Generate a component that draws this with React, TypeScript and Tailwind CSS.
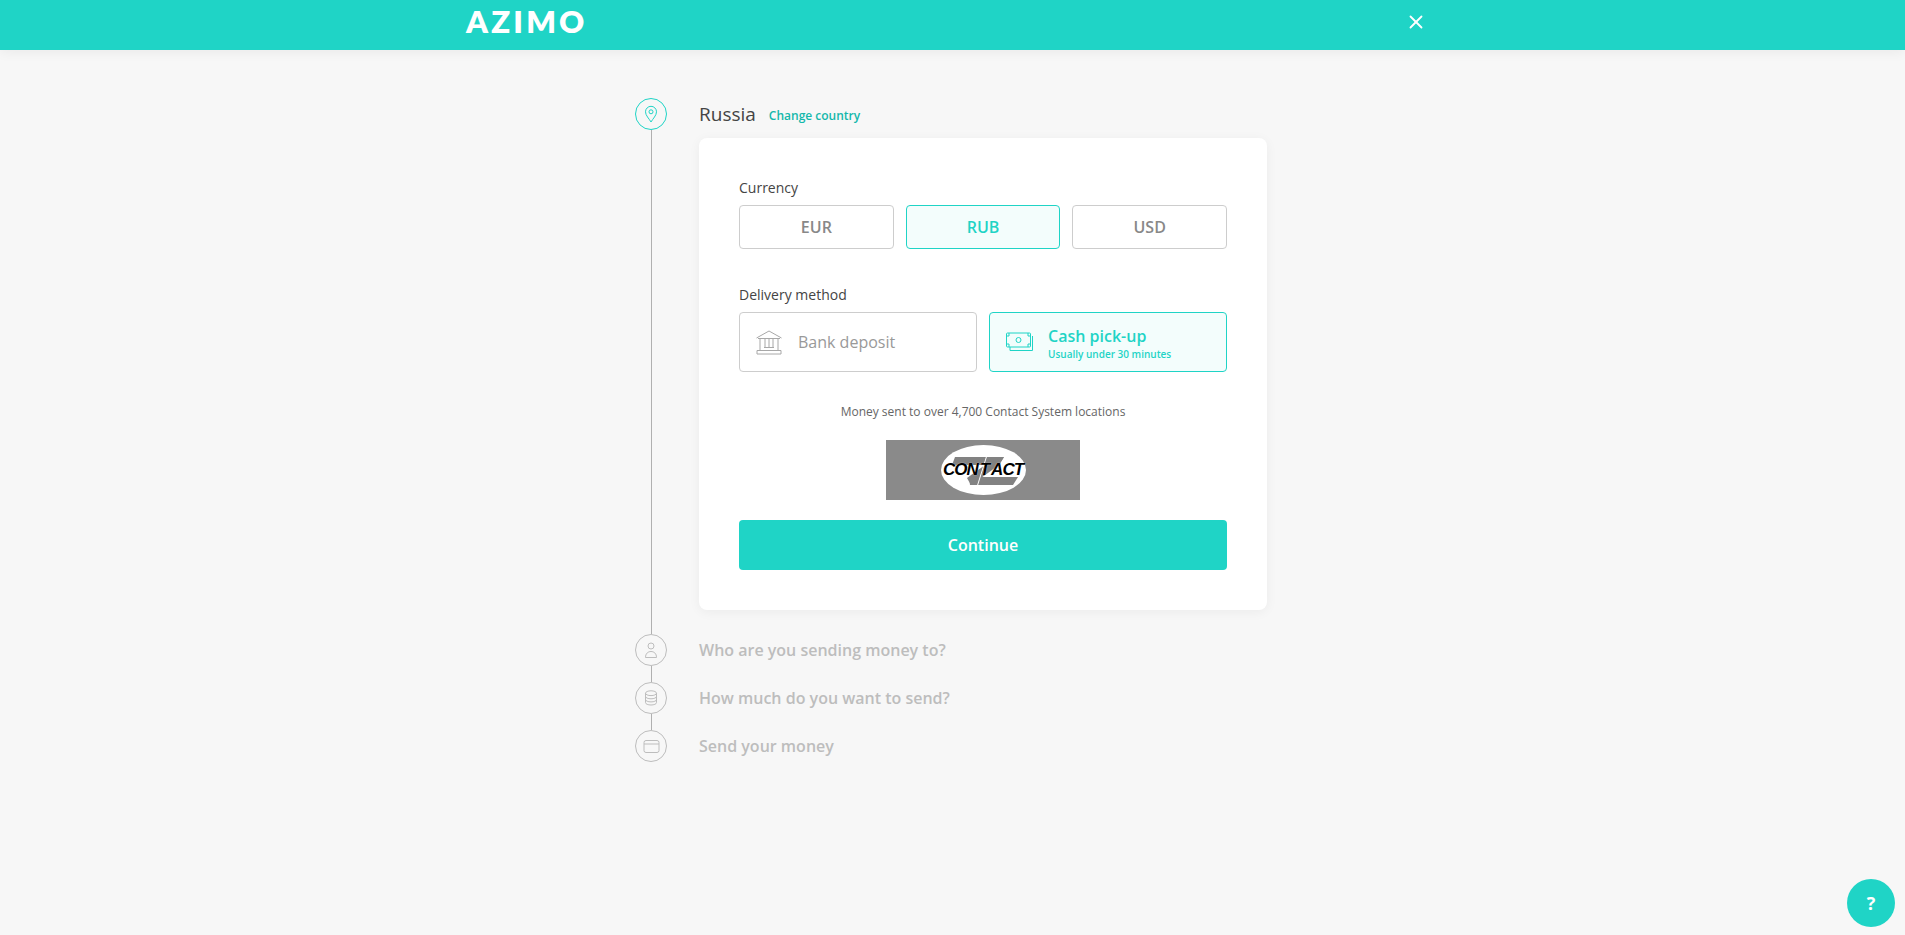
import { X } from 'lucide-react'

const font = { fontFamily: '"Open Sans", sans-serif' }

const PinIcon = () => (
  <svg width="14" height="18" viewBox="0 0 14 18" fill="none" stroke="#1fd4c6" strokeWidth="1">
    <path d="M7 17 C5 13.5 1.5 10.5 1.5 6.8 A5.5 5.5 0 0 1 12.5 6.8 C12.5 10.5 9 13.5 7 17 Z" />
    <circle cx="7" cy="6.8" r="2" />
  </svg>
)

const UserIcon = () => (
  <svg width="14" height="17" viewBox="0 0 14 17" fill="none" stroke="#bdbdbd" strokeWidth="1">
    <circle cx="7" cy="4" r="3" />
    <path d="M1.5 15.5 C1.5 11.5 4 9.5 7 9.5 C10 9.5 12.5 11.5 12.5 15.5 Z" />
  </svg>
)

const CoinsIcon = () => (
  <svg width="14" height="16" viewBox="0 0 14 16" fill="none" stroke="#bdbdbd" strokeWidth="1">
    <ellipse cx="7" cy="3.2" rx="5.5" ry="2.4" />
    <path d="M1.5 3.2 V12.6 C1.5 14 4 15 7 15 C10 15 12.5 14 12.5 12.6 V3.2" />
    <path d="M1.5 6.4 C1.5 7.8 4 8.8 7 8.8 C10 8.8 12.5 7.8 12.5 6.4" />
    <path d="M1.5 9.5 C1.5 10.9 4 11.9 7 11.9 C10 11.9 12.5 10.9 12.5 9.5" />
  </svg>
)

const CardIcon = () => (
  <svg width="17" height="13" viewBox="0 0 17 13" fill="none" stroke="#bdbdbd" strokeWidth="1">
    <rect x="1" y="0.5" width="15" height="12" rx="2" />
    <path d="M1 4 H16" />
  </svg>
)

const BankIcon = () => (
  <svg width="28" height="25" viewBox="0 0 28 25" fill="none" stroke="#a8a8a8" strokeWidth="1">
    <path d="M1.5 8 L14 1 L26.5 8" />
    <path d="M3 8.5 H25" />
    <path d="M5 9 V20 M10 9 V17 M14 9 V17 M18 9 V17 M23 9 V20" />
    <path d="M9 17.5 H19" />
    <path d="M2 20.5 H26 V24 H2 Z" />
  </svg>
)

const CashIcon = () => (
  <svg width="27" height="20" viewBox="0 0 27 20" fill="none" stroke="#1fd4c6" strokeWidth="1">
    <rect x="0.5" y="1" width="24" height="14" rx="1" />
    <circle cx="12.5" cy="8" r="2.5" />
    <path d="M0.5 4 H3 V1 M24.5 4 H22 V1 M0.5 12 H3 V15 M24.5 12 H22 V15" />
    <path d="M26.5 4 V18.5 H4 V15" />
  </svg>
)

const ContactLogo = () => (
  <div className="flex h-[60px] w-[194px] items-center justify-center bg-[#8a8a8a]">
    <div className="relative flex h-[50px] w-[85px] items-center justify-center rounded-[50%] bg-white">
      <svg className="absolute left-0 top-0" width="85" height="50" viewBox="0 0 85 50">
        <polygon points="14,12 63,12 58,20 11,20" fill="#828282" />
        <polygon points="63,12 58,20 40,33 30,40 26,33 44,20" fill="#828282" />
        <polygon points="28,32 77,32 72,40 29,40" fill="#828282" />
        <path d="M46 10 L36 42" stroke="#ffffff" strokeWidth="1" />
      </svg>
      <span
        className="relative whitespace-nowrap text-[17px] font-bold italic tracking-[-1px] text-black [text-shadow:0_0_1px_#fff]"
        style={{ fontFamily: '"Liberation Sans", sans-serif' }}
      >
        CON<span className="mx-[2px]">T</span>ACT
      </span>
    </div>
  </div>
)

const currencies = [
  { code: 'EUR', active: false },
  { code: 'RUB', active: true },
  { code: 'USD', active: false },
]

const steps = [
  { label: 'Who are you sending money to?', icon: <UserIcon /> },
  { label: 'How much do you want to send?', icon: <CoinsIcon /> },
  { label: 'Send your money', icon: <CardIcon /> },
]

export default function App() {
  return (
    <div className="relative h-[935px] overflow-hidden bg-[#f7f7f7] text-[#444]" style={font}>
      <header className="h-[50px] bg-[#1fd4c6] shadow-[0_2px_12px_rgba(0,0,0,0.06)]">
        <div className="mx-auto flex h-[42px] w-[973px] items-center justify-between pr-[12px]">
          <span className="text-[31px] font-extrabold leading-none tracking-[3.2px] text-white" style={{ fontFamily: 'Lato, sans-serif' }}>
            AZIMO
          </span>
          <X className="mt-[1px] text-white" size={22} strokeWidth={2} />
        </div>
      </header>

      <main className="mx-auto w-[635px] pt-[48px]">
        <section className="flex">
          <div className="flex w-[64px] flex-col">
            <div className="flex h-[32px] w-[32px] items-center justify-center rounded-full border border-[#1fd4c6]">
              <PinIcon />
            </div>
            <div className="ml-[15.5px] w-px flex-1 bg-[#b0b0b0]" />
          </div>
          <div className="w-[568px] pb-[24px]">
            <div className="flex h-[32px] items-center">
              <span className="text-[19px]">Russia</span>
              <span className="ml-[13px] mt-[3px] text-[12px] font-semibold text-[#14b8ab]">Change country</span>
            </div>
            <div className="mt-[8px] rounded-lg bg-white p-[40px] shadow-[0_2px_12px_rgba(0,0,0,0.05)]">
              <p className="text-[14px] leading-[20px]">Currency</p>
              <div className="mt-[7px] grid grid-cols-3 gap-3">
                {currencies.map((c) => (
                  <div
                    key={c.code}
                    className={
                      c.active
                        ? 'flex h-[44px] items-center justify-center rounded border border-[#1fd4c6] bg-[#f3fdfc] text-[16px] font-semibold text-[#1fd4c6]'
                        : 'flex h-[44px] items-center justify-center rounded border border-[#cdcdcd] text-[16px] font-semibold text-[#888]'
                    }
                  >
                    {c.code}
                  </div>
                ))}
              </div>
              <p className="mt-[36px] text-[14px] leading-[20px]">Delivery method</p>
              <div className="mt-[7px] grid grid-cols-2 gap-3">
                <div className="flex h-[60px] items-center rounded border border-[#cdcdcd] pl-[15px]">
                  <BankIcon />
                  <span className="ml-[15px] text-[16px] text-[#999]">Bank deposit</span>
                </div>
                <div className="flex h-[60px] items-center rounded border border-[#1fd4c6] bg-[#f3fdfc] pl-[16px]">
                  <CashIcon />
                  <div className="ml-[15px] pt-[4px]">
                    <p className="text-[16px] font-semibold leading-[21px] text-[#1fd4c6]">Cash pick-up</p>
                    <p className="text-[10px] font-semibold leading-[15px] text-[#1fd4c6]">Usually under 30 minutes</p>
                  </div>
                </div>
              </div>
              <p className="mt-[31px] text-center text-[12px] leading-[18px] text-[#666]">
                Money sent to over 4,700 Contact System locations
              </p>
              <div className="mt-[19px] flex justify-center">
                <ContactLogo />
              </div>
              <button className="mt-[20px] block h-[50px] w-full rounded bg-[#1fd4c6] text-[16px] font-semibold text-white">
                Continue
              </button>
            </div>
          </div>
        </section>

        {steps.map((step, i) => (
          <section key={step.label} className="flex">
            <div className="flex w-[64px] flex-col">
              <div className="flex h-[32px] w-[32px] items-center justify-center rounded-full border border-[#bdbdbd]">
                {step.icon}
              </div>
              {i < steps.length - 1 && <div className="ml-[15.5px] h-[16px] w-px bg-[#b0b0b0]" />}
            </div>
            <div className="flex h-[32px] items-center text-[16px] font-semibold text-[#bdbdbd]">{step.label}</div>
          </section>
        ))}
      </main>

      <div className="absolute bottom-[8px] right-[10px] flex h-[48px] w-[48px] items-center justify-center rounded-full bg-[#1fd4c6] text-[18px] font-bold text-white">
        ?
      </div>
    </div>
  )
}
